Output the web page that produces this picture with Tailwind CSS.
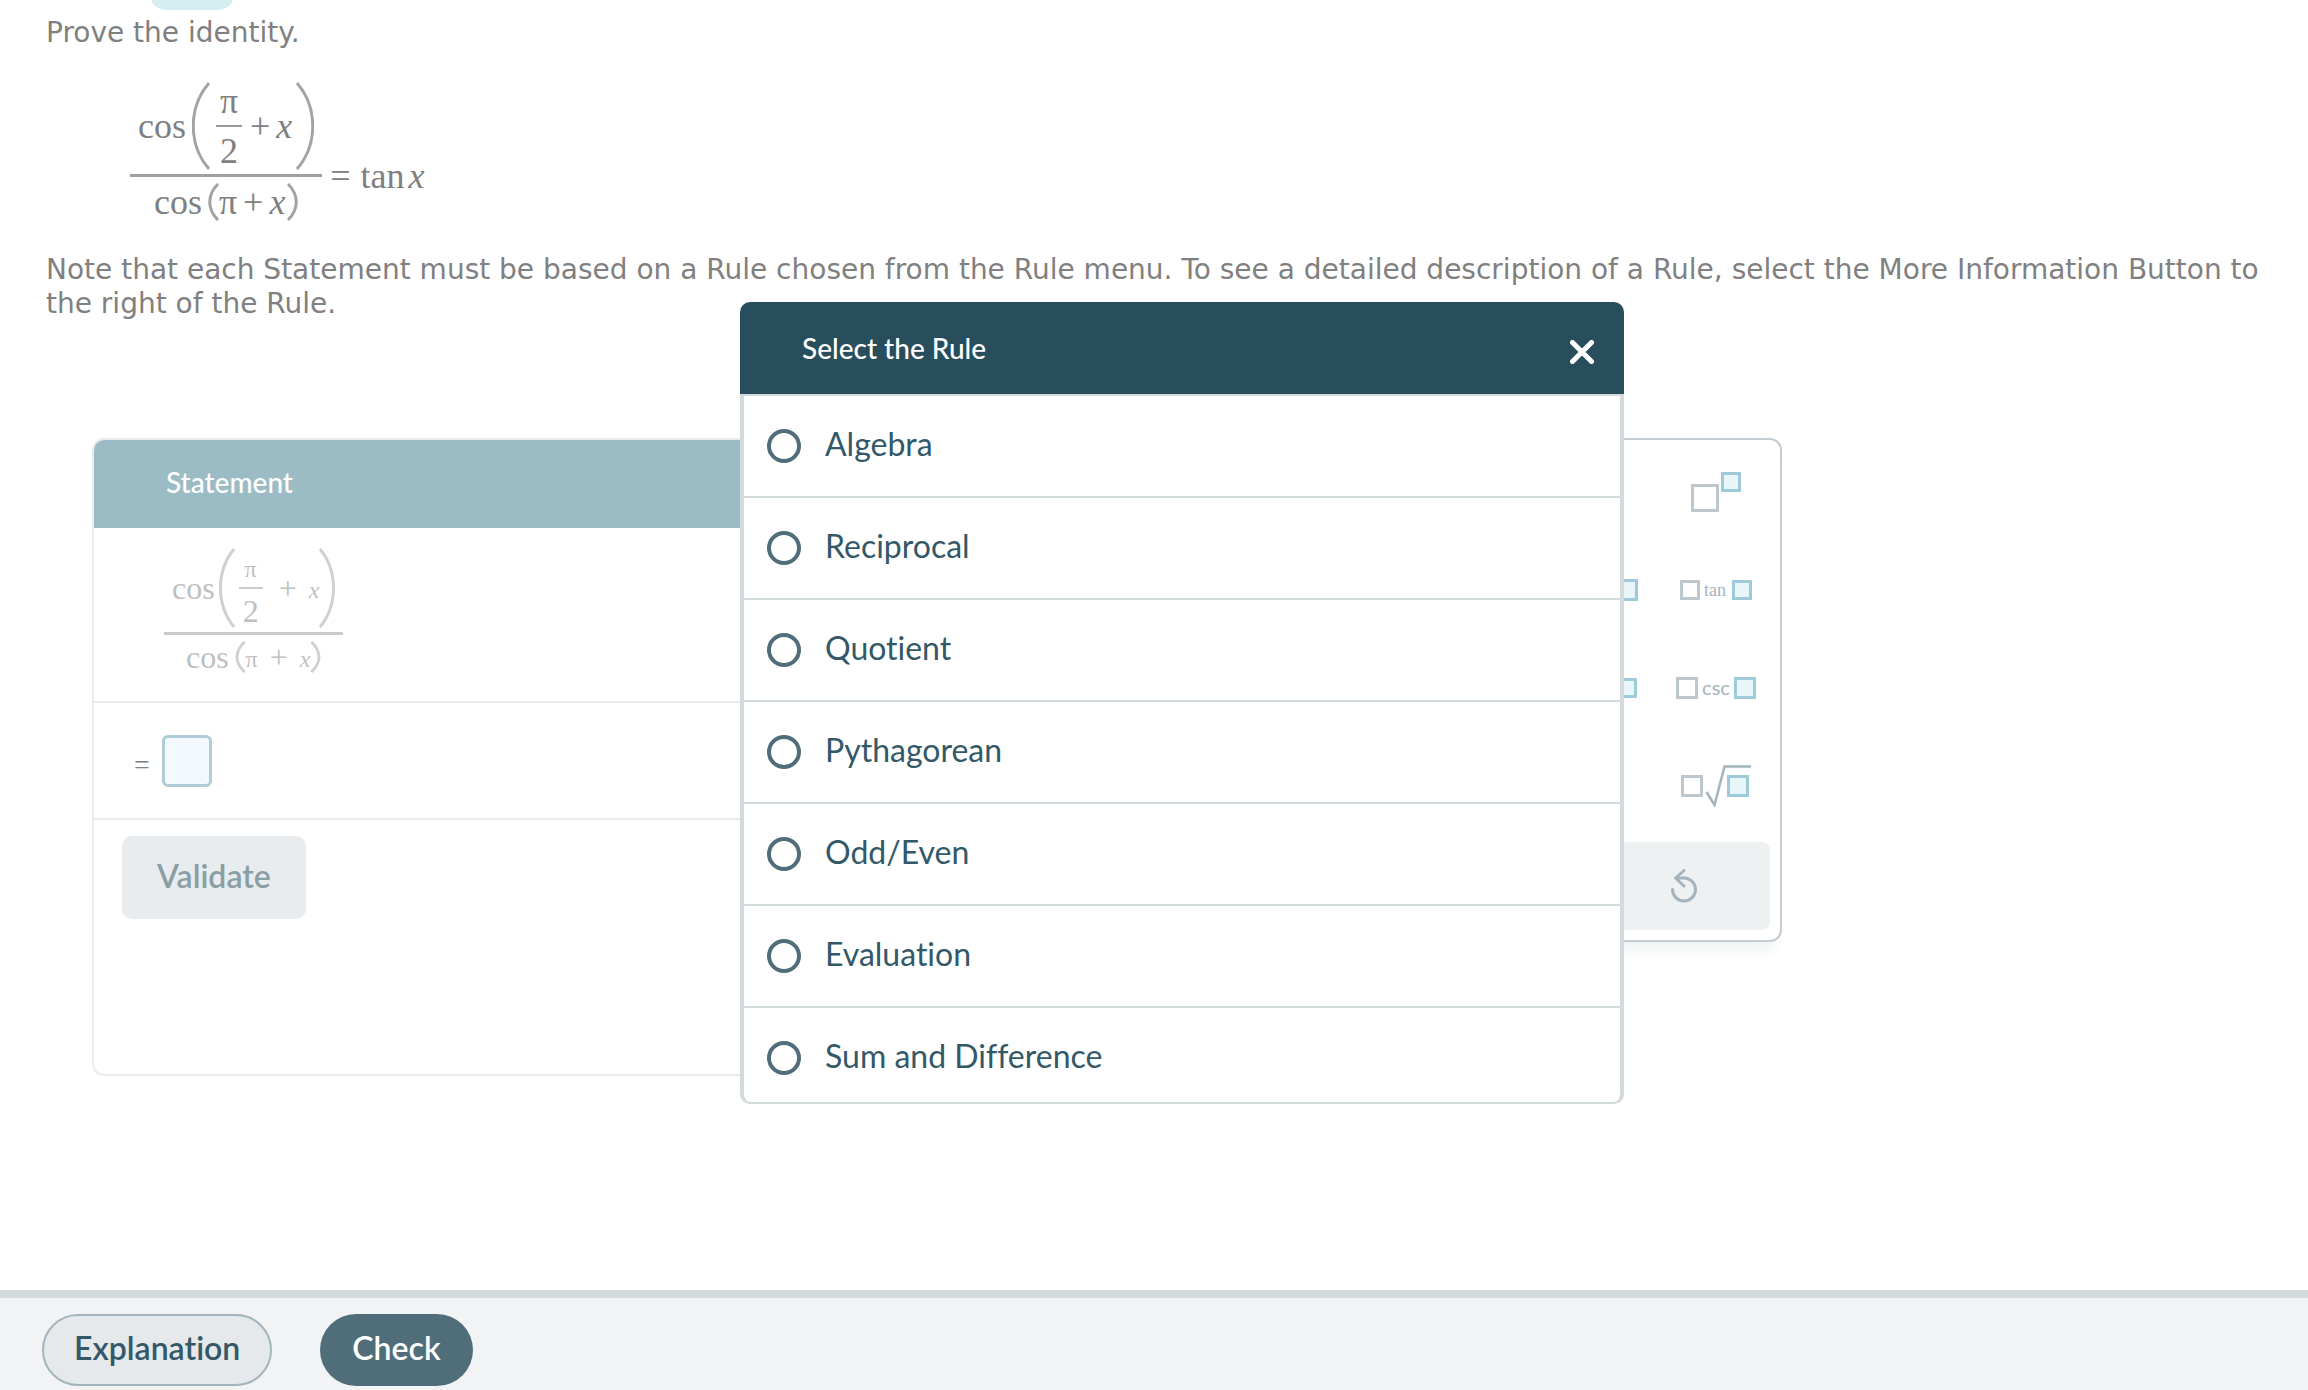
<!DOCTYPE html>
<html lang="en">
<head>
  <meta charset="UTF-8">
  <meta name="viewport" content="width=device-width, initial-scale=1.0">
  <title>Prove the identity</title>
  <script src="https://cdn.jsdelivr.net/npm/@tailwindcss/browser@4"></script>
</head>
<body class="flex min-h-screen flex-col bg-white font-['Lato',sans-serif] [font-variant-ligatures:no-common-ligatures]">
  <header class="flex h-2.5 items-end overflow-hidden pl-[150px]">
    <div class="h-10 w-[84px] shrink-0 rounded-2xl bg-[#d4eef2]"></div>
  </header>

  <main class="flex-1 pt-1.5 pr-6 pl-[46px]">
    <p class="font-['DejaVu_Sans',sans-serif] text-[28px] leading-[34px] text-[#808080]">Prove the identity.</p>

    <!-- Identity to prove -->
    <div class="mt-8 mb-8 ml-[84px] flex items-end gap-2 font-['Liberation_Serif',serif] text-4xl leading-9 text-[#808080]">
      <div class="flex flex-col items-center">
        <div class="flex h-[88px] items-center px-2">
          <span>cos</span>
          <svg class="mr-1.5 ml-1.5 h-[88px] w-[18px]" viewBox="0 0 18 88" fill="none" stroke="#a3a3a3" stroke-width="3"><path d="M17 1C-4 25-4 63 17 87"/></svg>
          <span class="flex w-[26px] flex-col items-center">
            <span>π</span>
            <span class="my-1.5 h-0.5 w-full bg-[#999]"></span>
            <span>2</span>
          </span>
          <span class="ml-2">+</span>
          <i class="ml-1.5">x</i>
          <svg class="ml-1 h-[88px] w-[18px]" viewBox="0 0 18 88" fill="none" stroke="#a3a3a3" stroke-width="3"><path d="M1 1c21 24 21 62 0 86"/></svg>
        </div>
        <div class="mt-1 mb-1.5 h-[3px] w-full bg-[#a0a0a0]"></div>
        <div class="flex h-[38px] items-center">
          <span>cos</span>
          <svg class="ml-1.5 h-[38px] w-[11px]" viewBox="0 0 11 38" fill="none" stroke="#a3a3a3" stroke-width="3"><path d="M10 1C-1 12-1 26 10 37"/></svg>
          <span>π</span>
          <span class="ml-1.5">+</span>
          <i class="ml-1.5">x</i>
          <svg class="ml-0.5 h-[38px] w-[11px]" viewBox="0 0 11 38" fill="none" stroke="#a3a3a3" stroke-width="3"><path d="M1 1c11 11 11 25 0 36"/></svg>
        </div>
      </div>
      <div class="flex gap-2.5 pb-[27px]">
        <span>=</span>
        <span class="flex gap-1">tan<i>x</i></span>
      </div>
    </div>

    <p class="font-['DejaVu_Sans',sans-serif] text-[28px] leading-[34px] text-[#808080]">Note that each Statement must be based on a Rule chosen from the Rule menu. To see a detailed description of a Rule, select the More Information Button to the right of the Rule.</p>

    <!-- Proof area -->
    <div class="relative mt-[117px] ml-[46px] flex max-w-[1690px] items-start gap-8">
      <section class="min-h-[638px] flex-1 overflow-hidden rounded-xl border-2 border-[#e8ecee]">
        <h2 class="bg-[#9bbcc5] pb-1 pl-[72px] text-[28px] leading-[84px] font-medium text-white">Statement</h2>
        <div class="flex border-b-2 border-[#e8ecee] pt-5 pb-7 pl-[70px] font-['Liberation_Serif',serif] text-[32px] leading-8 text-[#bfbfbf]">
          <div class="flex flex-col items-center">
            <div class="flex h-20 items-center px-2">
              <span>cos</span>
              <svg class="mr-1 ml-1 h-20 w-4" viewBox="0 0 16 80" fill="none" stroke="#d0d0d0" stroke-width="3"><path d="M15 1C-3 23-3 57 15 79"/></svg>
              <span class="flex w-6 flex-col items-center pt-2">
                <span class="text-2xl leading-6">π</span>
                <span class="my-1.5 h-0.5 w-full bg-[#ccc]"></span>
                <span>2</span>
              </span>
              <span class="ml-4">+</span>
              <i class="ml-3 pt-1 text-2xl">x</i>
              <svg class="h-20 w-4" viewBox="0 0 16 80" fill="none" stroke="#d0d0d0" stroke-width="3"><path d="M1 1c18 22 18 56 0 78"/></svg>
            </div>
            <div class="mt-1 mb-1.5 h-[3px] w-full bg-[#ccc]"></div>
            <div class="flex h-8 items-center">
              <span>cos</span>
              <svg class="ml-1.5 h-8 w-[11px]" viewBox="0 0 11 34" fill="none" stroke="#d0d0d0" stroke-width="3"><path d="M10 1C-1 11-1 23 10 33"/></svg>
              <span class="pt-1 text-2xl">π</span>
              <span class="ml-3">+</span>
              <i class="ml-3 pt-1 text-2xl">x</i>
              <svg class="h-8 w-[11px]" viewBox="0 0 11 34" fill="none" stroke="#d0d0d0" stroke-width="3"><path d="M1 1c11 10 11 22 0 32"/></svg>
            </div>
          </div>
        </div>
        <div class="flex h-[117px] items-center gap-3 border-b-2 border-[#e8ecee] pl-10">
          <label for="step" class="pt-2 font-['Liberation_Serif',serif] text-[28px] leading-8 text-[#808080]">=</label>
          <input id="step" type="text" class="h-[52px] w-[50px] rounded-md border-[3px] border-[#aecdd7] bg-[#f3f9fc]">
        </div>
        <button type="button" class="mt-4 ml-7 h-[83px] rounded-[10px] bg-[#e8ecee] px-[35px] pb-1 text-[32px] font-semibold text-[#8a9ea6]">Validate</button>
      </section>

      <!-- Keypad -->
      <section class="w-[368px] shrink-0 rounded-xl border-2 border-[#c4ced2] bg-white shadow-[0_16px_16px_-8px_#eef1f2]">
        <div class="grid auto-rows-[98px] grid-cols-3 pt-[3px] pr-1.5 pb-[7px] pl-2.5 text-lg leading-5 text-[#a3b4bc]">
          <button type="button" class="flex items-center justify-center" aria-label="Fraction">
            <svg class="h-14 w-6" viewBox="0 0 24 56" fill="none" stroke-width="3"><path stroke="#bcc8cd" d="M3.500 3.500h17v17h-17zM0 28h24"/><path stroke="#9fcad9" fill="#e8f6f9" d="M3.500 35.500h17v17h-17z"/></svg>
          </button>
          <button type="button" class="flex items-center justify-center font-['Liberation_Serif',serif] text-2xl">π</button>
          <button type="button" class="flex items-center justify-center" aria-label="Exponent">
            <svg class="h-10 w-[50px]" viewBox="0 0 50 40" stroke-width="3"><path fill="none" stroke="#bcc8cd" d="M1.500 13.500h25v25h-25z"/><path fill="#e8f6f9" stroke="#9fcad9" d="M31.500 1.500h17v17h-17z"/></svg>
          </button>

          <button type="button" class="flex items-center justify-center gap-1 font-['Liberation_Serif',serif]"><span class="size-5 border-[3px] border-[#bcc8cd]"></span>sin<span class="size-5 border-[3px] border-[#9fcad9] bg-[#e8f6f9]"></span></button>
          <button type="button" class="flex items-center justify-center gap-1 font-['Liberation_Serif',serif]"><span class="size-[22px] border-[3px] border-[#bcc8cd]"></span>cos<span class="size-[22px] border-[3px] border-[#9fcad9] bg-[#e8f6f9]"></span></button>
          <button type="button" class="flex items-center justify-center gap-1 font-['Liberation_Serif',serif]"><span class="size-5 border-[3px] border-[#bcc8cd]"></span>tan<span class="ml-0.5 size-5 border-[3px] border-[#9fcad9] bg-[#e8f6f9]"></span></button>

          <button type="button" class="flex items-center justify-center gap-1"><span class="size-5 border-[3px] border-[#bcc8cd]"></span>cot<span class="size-5 border-[3px] border-[#9fcad9] bg-[#e8f6f9]"></span></button>
          <button type="button" class="flex items-center justify-center gap-1"><span class="size-5 border-[3px] border-[#bcc8cd]"></span>sec<span class="size-5 border-[3px] border-[#9fcad9] bg-[#e8f6f9]"></span></button>
          <button type="button" class="flex items-center justify-center gap-1"><span class="size-[22px] border-[3px] border-[#bcc8cd]"></span><span class="pb-0.5 text-xl leading-5">csc</span><span class="size-[22px] border-[3px] border-[#9fcad9] bg-[#e8f6f9]"></span></button>

          <button type="button" class="flex items-center justify-center gap-1">(<span class="size-5 border-[3px] border-[#9fcad9] bg-[#e8f6f9]"></span>)</button>
          <button type="button" class="flex items-center justify-center" aria-label="Square root">
            <svg class="h-[42px] w-[46px]" viewBox="24 0 46 42" stroke-width="3"><path fill="#e8f6f9" stroke="#9fcad9" d="M47.500 11.500h19v19h-19z"/><path fill="none" stroke="#a3b4bc" d="M26 27l7.500 12.500L44 1.500h26"/></svg>
          </button>
          <button type="button" class="flex items-center justify-center" aria-label="Root">
            <svg class="h-[42px] w-[70px]" viewBox="0 0 70 42" fill="none" stroke-width="3"><path stroke="#bcc8cd" d="M1.500 11.500h19v19h-19z"/><path fill="#e8f6f9" stroke="#9fcad9" d="M47.500 11.500h19v19h-19z"/><path stroke="#a3b4bc" stroke-width="2.500" d="M25.500 27l8 13L43.500 1.500H70"/></svg>
          </button>
        </div>
        <div class="mx-2.5 mb-2.5 grid h-[88px] grid-cols-2 rounded-lg bg-[#eef1f2]">
          <button type="button" class="flex items-center justify-center" aria-label="Clear">
            <svg class="size-6" viewBox="0 0 24 24" fill="none" stroke="#a3b4bc" stroke-width="3" stroke-linecap="round"><path d="M3 3l18 18M21 3L3 21"/></svg>
          </button>
          <button type="button" class="flex items-center justify-center" aria-label="Undo">
            <svg class="h-9 w-7" viewBox="0 0 28 36" fill="none" stroke="#a3b4bc" stroke-width="3" stroke-linecap="round" stroke-linejoin="round"><path d="M2.500 21.500A11.500 11.500 0 1 0 14 10L5.500 10M14 2.500L5.500 10l8.500 8"/></svg>
          </button>
        </div>
      </section>

      <!-- Rule menu -->
      <div class="absolute -top-[136px] left-[648px] w-[884px]" role="dialog" aria-labelledby="rule-title">
        <div class="flex h-[92px] items-center justify-between rounded-t-[10px] bg-[#284d5c] pr-[30px] pl-[62px]">
          <h2 id="rule-title" class="text-[28px] font-medium text-white">Select the Rule</h2>
          <button type="button" aria-label="Close" class="pt-2">
            <svg class="size-6" viewBox="0 0 24 24" fill="none" stroke="#fff" stroke-width="5" stroke-linecap="round"><path d="M2.500 2.500l19 19M21.500 2.500l-19 19"/></svg>
          </button>
        </div>
        <div class="max-h-[710px] overflow-hidden rounded-b-[10px] border-x-4 border-y-2 border-[#d3dbde] bg-white text-[32px] leading-10 text-[#335868]">
          <label class="flex h-[102px] items-center gap-6 border-b-2 border-[#d3dbde] pl-[23px]"><input type="radio" name="rule" class="size-[34px] appearance-none rounded-full border-4 border-[#4f6e7a]"><span class="pb-1">Algebra</span></label>
          <label class="flex h-[102px] items-center gap-6 border-b-2 border-[#d3dbde] pl-[23px]"><input type="radio" name="rule" class="size-[34px] appearance-none rounded-full border-4 border-[#4f6e7a]"><span class="pb-1">Reciprocal</span></label>
          <label class="flex h-[102px] items-center gap-6 border-b-2 border-[#d3dbde] pl-[23px]"><input type="radio" name="rule" class="size-[34px] appearance-none rounded-full border-4 border-[#4f6e7a]"><span class="pb-1">Quotient</span></label>
          <label class="flex h-[102px] items-center gap-6 border-b-2 border-[#d3dbde] pl-[23px]"><input type="radio" name="rule" class="size-[34px] appearance-none rounded-full border-4 border-[#4f6e7a]"><span class="pb-1">Pythagorean</span></label>
          <label class="flex h-[102px] items-center gap-6 border-b-2 border-[#d3dbde] pl-[23px]"><input type="radio" name="rule" class="size-[34px] appearance-none rounded-full border-4 border-[#4f6e7a]"><span class="pb-1">Odd/Even</span></label>
          <label class="flex h-[102px] items-center gap-6 border-b-2 border-[#d3dbde] pl-[23px]"><input type="radio" name="rule" class="size-[34px] appearance-none rounded-full border-4 border-[#4f6e7a]"><span class="pb-1">Evaluation</span></label>
          <label class="flex h-[102px] items-center gap-6 border-b-2 border-[#d3dbde] pl-[23px]"><input type="radio" name="rule" class="size-[34px] appearance-none rounded-full border-4 border-[#4f6e7a]"><span class="pb-1">Sum and Difference</span></label>
        </div>
      </div>
    </div>
  </main>

  <footer class="flex gap-12 border-t-8 border-[#d2dadd] bg-[#f1f3f5] pt-4 pb-1 pl-[42px]">
    <button type="button" class="h-[72px] rounded-full border-2 border-[#a3b5bc] bg-[#e5e9ec] px-[30px] pb-1 text-[32px] font-semibold text-[#335868]">Explanation</button>
    <button type="button" class="h-[72px] rounded-full bg-[#4f6e7a] px-8 pb-1 text-[32px] font-semibold text-white">Check</button>
  </footer>
</body>
</html>
